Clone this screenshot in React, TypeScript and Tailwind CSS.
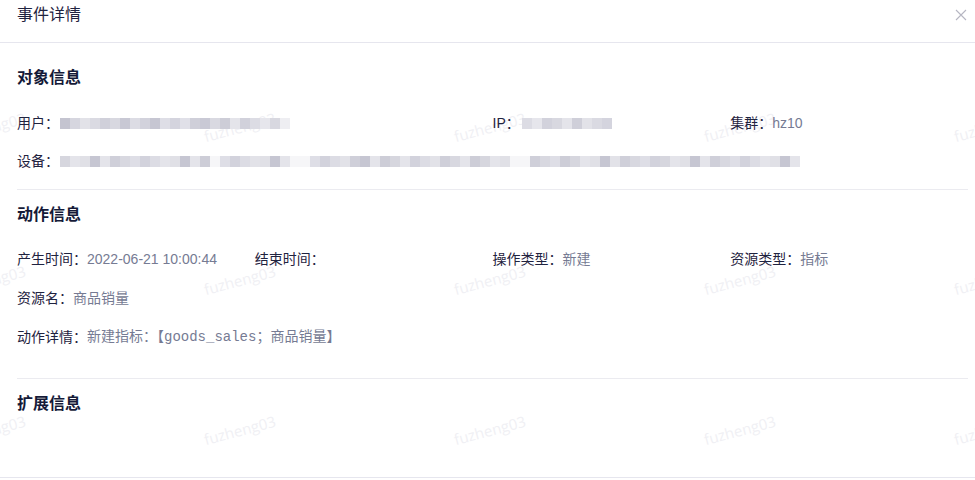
import React from "react";

const userBlocks = ["#c4c4d0","#d6d6df","#e2e2e8","#dadae2","#d0d0da","#d8d8e0","#c8c8d4","#dcdce4","#d2d2dc","#c6c6d2","#dedee6","#d4d4de","#e0e0e8","#cfcfd9","#c9c9d5","#d9d9e1","#cdcdd7","#e4e4ea","#d1d1db","#dcdce4","#e6e6ec","#d8d8e0","#eeeef2"];
const ipBlocks = ["#dcdce4","#e6e6ec","#d2d2dc","#d8d8e0","#e4e4ea","#cfcfd9","#e2e2e8","#dadae2","#d4d4de"];
const shades = ["#d6d6de","#e2e2e8","#cdcdd7","#dcdce4","#e4e4ea","#d2d2dc","#c6c6d2","#dedee6","#e0e0e6","#d8d8e0","#e4e4ea","#cfcfd9"];
const deviceGaps = new Set([15, 23, 24, 45, 46]);
const deviceBlocks = Array.from({ length: 74 }, (_, i) =>
  deviceGaps.has(i) ? "#f6f6f8" : shades[(i * 7 + (i % 5) * 3) % shades.length]
);

function Mosaic({ colors }: { colors: string[] }) {
  return (
    <div className="flex h-[11px]">
      {colors.map((c, i) => (
        <div key={i} className="w-[10px] h-[11px]" style={{ backgroundColor: c }} />
      ))}
    </div>
  );
}

const label = "text-[#1f2340]";
const value = "text-[#767b93]";

function Field({ name, children }: { name: string; children?: React.ReactNode }) {
  return (
    <div className="flex items-center h-[22px] whitespace-nowrap">
      <span className={label}>{name}：</span>
      {children}
    </div>
  );
}

const wmLefts = [-47, 203, 453, 703, 953];
const wmTops = [117, 270, 420];

export default function App() {
  return (
    <div
      className="relative w-[975px] h-[480px] bg-white overflow-hidden text-[14px] leading-[22px]"
      style={{ fontFamily: '"Liberation Sans", "Noto Sans CJK SC", sans-serif' }}
    >
      {/* watermarks */}
      {wmTops.map((t) =>
        wmLefts.map((l) => (
          <span
            key={`${t}-${l}`}
            className="absolute text-[15px] leading-[20px] text-[#f0f0f4] -rotate-[15deg] select-none pointer-events-none"
            style={{ left: l, top: t, fontFamily: '"Open Sans", sans-serif' }}
          >
            fuzheng03
          </span>
        ))
      )}

      <div className="relative">
        {/* header */}
        <div className="h-[43px] border-b border-[#e6e6ee] flex items-start justify-between pl-[17px] pr-[8px] pt-[3px]">
          <span className="text-[16px] leading-[24px] text-[#1f2340]">事件详情</span>
          <svg width="12" height="12" viewBox="0 0 12 12" className="mt-[6px]" fill="none">
            <path d="M1 1 L11 11 M11 1 L1 11" stroke="#b6b6c2" strokeWidth="1.1" />
          </svg>
        </div>

        <div className="pl-[17px] pr-[7px]">
          {/* 对象信息 */}
          <div className="mt-[23px] text-[16px] leading-[24px] font-bold text-[#151a38]">对象信息</div>
          <div className="mt-[22px] grid grid-cols-4">
            <div className="col-span-2">
              <Field name="用户">
                <div className="ml-[1px] mt-[1px]">
                  <Mosaic colors={userBlocks} />
                </div>
              </Field>
            </div>
            <div>
              <Field name="IP">
                <div className="ml-[2px] mt-[1px]">
                  <Mosaic colors={ipBlocks} />
                </div>
              </Field>
            </div>
            <div>
              <Field name="集群">
                <span className={value}>hz10</span>
              </Field>
            </div>
          </div>
          <div className="mt-[16px]">
            <Field name="设备">
              <div className="ml-[1px] mt-[1px]">
                <Mosaic colors={deviceBlocks} />
              </div>
            </Field>
          </div>
          <div className="mt-[17px] border-t border-[#ebebf0]" />

          {/* 动作信息 */}
          <div className="mt-[13px] text-[16px] leading-[24px] font-bold text-[#151a38]">动作信息</div>
          <div className="mt-[21px] grid grid-cols-4">
            <Field name="产生时间">
              <span className={value}>2022-06-21 10:00:44</span>
            </Field>
            <Field name="结束时间" />
            <Field name="操作类型">
              <span className={value}>新建</span>
            </Field>
            <Field name="资源类型">
              <span className={value}>指标</span>
            </Field>
          </div>
          <div className="mt-[17px]">
            <Field name="资源名">
              <span className={value}>商品销量</span>
            </Field>
          </div>
          <div className="mt-[17px]">
            <Field name="动作详情">
              <span
                className={value}
                style={{ fontFamily: '"Liberation Mono", "Noto Sans CJK SC", monospace' }}
              >
                新建指标：【goods_sales；商品销量】
              </span>
            </Field>
          </div>
          <div className="mt-[30px] border-t border-[#ebebf0]" />

          {/* 扩展信息 */}
          <div className="mt-[13px] text-[16px] leading-[24px] font-bold text-[#151a38]">扩展信息</div>
        </div>
      </div>

      <div className="absolute left-0 right-0 top-[477px] border-t border-[#e6e6ee]" />
    </div>
  );
}
